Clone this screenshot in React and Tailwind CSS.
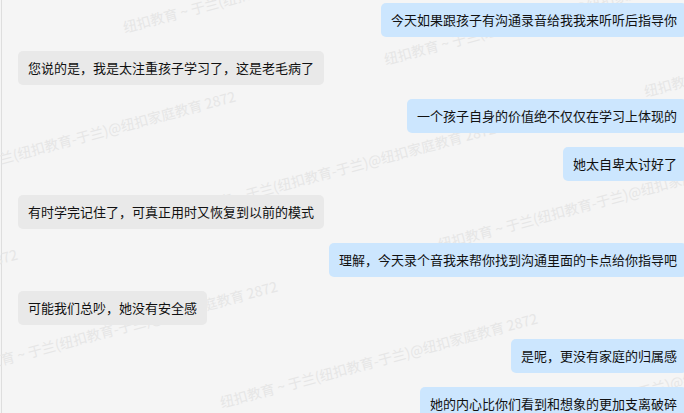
const MESSAGES = [
  { side: "right", text: "今天如果跟孩子有沟通录音给我我来听听后指导你" },
  { side: "left", text: "您说的是，我是太注重孩子学习了，这是老毛病了" },
  { side: "right", text: "一个孩子自身的价值绝不仅仅在学习上体现的" },
  { side: "right", text: "她太自卑太讨好了" },
  { side: "left", text: "有时学完记住了，可真正用时又恢复到以前的模式" },
  { side: "right", text: "理解，今天录个音我来帮你找到沟通里面的卡点给你指导吧" },
  { side: "left", text: "可能我们总吵，她没有安全感" },
  { side: "right", text: "是呢，更没有家庭的归属感" },
  { side: "right", text: "她的内心比你们看到和想象的更加支离破碎" },
];

const WATERMARK = "纽扣教育 ~ 于兰(纽扣教育-于兰)@纽扣家庭教育 2872";

// baseline-left start points of the tiled watermark
const MARKS = [
  { x: 123, y: 33 },
  { x: 384, y: 65 },
  { x: 644, y: 97 },
  { x: -82, y: 186 },
  { x: 178, y: 218 },
  { x: 438, y: 250 },
  { x: -300, y: 344 },
  { x: -40, y: 376 },
  { x: 220, y: 408 },
  { x: 480, y: 440 },
];

function Watermark() {
  return (
    <div className="absolute inset-0 pointer-events-none select-none">
      {MARKS.map((m, i) => (
        <span
          key={i}
          className="absolute whitespace-nowrap text-[14px] leading-[14px] text-[#e6e6e6] -rotate-15 origin-bottom-left"
          style={{ left: m.x, top: m.y - 13 }}
        >
          {WATERMARK}
        </span>
      ))}
    </div>
  );
}

function Bubble({ side, text }) {
  const isRight = side === "right";
  return (
    <div className={isRight ? "flex justify-end" : "flex justify-start"}>
      <div
        className={
          "h-[34px] flex items-center px-[10px] rounded-[5px] text-[13px] text-[#111] whitespace-nowrap " +
          (isRight ? "bg-[#cce6fe]" : "bg-[#e9e9e9]")
        }
      >
        {text}
      </div>
    </div>
  );
}

export default function App() {
  return (
    <div
      className="relative h-[413px] w-full overflow-hidden bg-[#f5f5f5] pl-px"
      style={{ fontFamily: '"Noto Sans CJK SC", "Noto Sans", sans-serif' }}
    >
      <div className="relative h-full border-l border-[#dedede]">
        <Watermark />
        <div className="relative flex flex-col gap-[14px] pt-[3px] pl-4 mr-[-3px]">
          {MESSAGES.map((m, i) => (
            <Bubble key={i} side={m.side} text={m.text} />
          ))}
        </div>
      </div>
    </div>
  );
}
